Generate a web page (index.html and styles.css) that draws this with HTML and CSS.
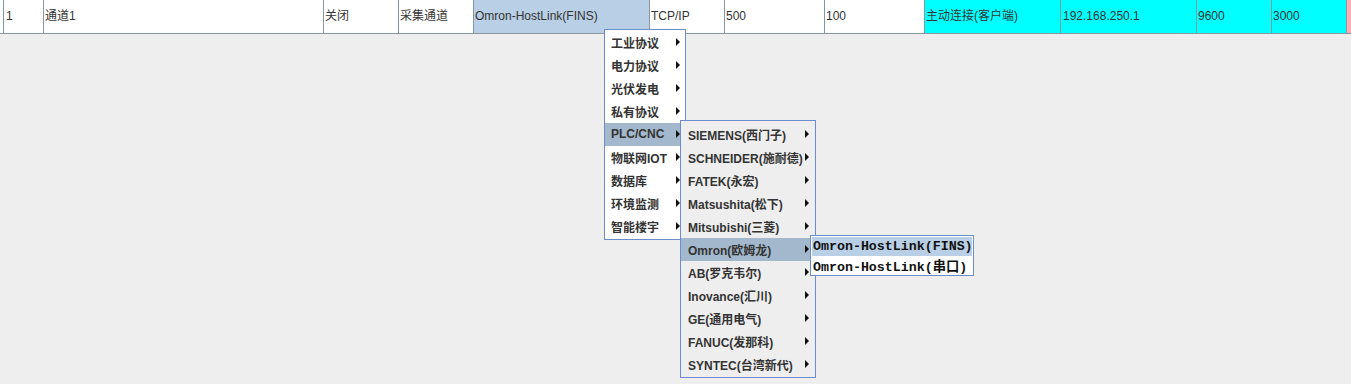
FILE: index.html
```html
<!DOCTYPE html>
<html lang="zh">
  <head>
    <meta charset="UTF-8" />
    <title>通道</title>
    <link rel="stylesheet" href="styles.css">
  </head>
  <body>
    <div class="rad">
      <div class="celle kant"></div>
      <div class="celle c1">1</div>
      <div class="celle c2">通道1</div>
      <div class="celle c3">关闭</div>
      <div class="celle c4">采集通道</div>
      <div class="celle c5 valgt">Omron-HostLink(FINS)</div>
      <div class="celle c6">TCP/IP</div>
      <div class="celle c7">500</div>
      <div class="celle c8">100</div>
      <div class="celle c9 cyan">主动连接(客户端)</div>
      <div class="celle c10 cyan">192.168.250.1</div>
      <div class="celle c11 cyan">9600</div>
      <div class="celle c12 cyan">3000</div>
      <div class="celle rosa"></div>
    </div>

    <ul class="menu menu1">
      <li>工业协议<span class="pil"></span></li>
      <li>电力协议<span class="pil"></span></li>
      <li>光伏发电<span class="pil"></span></li>
      <li>私有协议<span class="pil"></span></li>
      <li class="aktiv">PLC/CNC<span class="pil"></span></li>
      <li>物联网IOT<span class="pil"></span></li>
      <li>数据库<span class="pil"></span></li>
      <li>环境监测<span class="pil"></span></li>
      <li>智能楼宇<span class="pil"></span></li>
    </ul>

    <ul class="menu menu2">
      <li>SIEMENS(西门子)<span class="pil"></span></li>
      <li>SCHNEIDER(施耐德)<span class="pil"></span></li>
      <li>FATEK(永宏)<span class="pil"></span></li>
      <li>Matsushita(松下)<span class="pil"></span></li>
      <li>Mitsubishi(三菱)<span class="pil"></span></li>
      <li class="aktiv">Omron(欧姆龙)<span class="pil"></span></li>
      <li>AB(罗克韦尔)<span class="pil"></span></li>
      <li>Inovance(汇川)<span class="pil"></span></li>
      <li>GE(通用电气)<span class="pil"></span></li>
      <li>FANUC(发那科)<span class="pil"></span></li>
      <li>SYNTEC(台湾新代)<span class="pil"></span></li>
    </ul>

    <ul class="menu menu3">
      <li class="aktiv">Omron-HostLink(FINS)</li>
      <li>Omron-HostLink(串口)</li>
    </ul>
  </body>
</html>
```

FILE: styles.css
```css
* {
  box-sizing: border-box;
}

body {
  margin: 0;
  background: #eeeeee;
  width: 1351px;
  height: 384px;
  overflow: hidden;
  position: relative;
  font-family: "Liberation Sans", "Noto Sans CJK SC", sans-serif;
  font-size: 12px;
  color: #333333;
}

.rad {
  display: flex;
  height: 34px;
  background: #ffffff;
  border-bottom: 1px solid #8796a3;
}

.celle {
  height: 33px;
  line-height: 32px;
  padding-left: 2px;
  border-right: 1px solid #8796a3;
  white-space: nowrap;
  overflow: hidden;
}

.kant { width: 4px; padding: 0; }
.c1 { width: 40px; }
.c2 { width: 280px; padding-left: 1px; }
.c3 { width: 75px; padding-left: 1px; }
.c4 { width: 75px; padding-left: 1px; }
.c5 { width: 176px; padding-left: 1px; }
.c6 { width: 75px; padding-left: 1px; }
.c7 { width: 100px; padding-left: 1px; }
.c8 { width: 100px; padding-left: 1px; }
.c9 { width: 136px; padding-left: 1px; }
.c10 { width: 136px; padding-left: 2px; }
.c11 { width: 75px; padding-left: 1px; }
.c12 { width: 75px; padding-left: 1px; }

.valgt {
  background: #b8cfe5;
}

.cyan {
  background: #00ffff;
}

.rosa {
  flex: 1;
  background: #ffafaf;
  border-right: none;
}

.menu {
  position: absolute;
  margin: 0;
  list-style: none;
  border: 1px solid #6c8dcb;
  font-weight: bold;
}

.menu li {
  position: relative;
  display: flex;
  align-items: center;
  height: 23px;
  padding-bottom: 1px;
  white-space: nowrap;
}

.menu .aktiv {
  background: #a3b8cc;
}

.pil {
  position: absolute;
  top: 7px;
  width: 0;
  height: 0;
  border-top: 4px solid transparent;
  border-bottom: 4px solid transparent;
  border-left: 4px solid #111111;
}

.menu1 {
  left: 604px;
  top: 29px;
  width: 82px;
  padding: 1px 0;
  background: #ffffff;
}

.menu1 li {
  padding-left: 6px;
}

.menu1 .pil {
  left: 71px;
}

.menu2 {
  left: 680px;
  top: 120px;
  width: 136px;
  padding: 2px 0 1px;
  background: #eeeeee;
}

.menu2 li {
  padding-left: 7px;
}

.menu2 .pil {
  left: 124px;
}

.menu3 {
  left: 810px;
  top: 235px;
  width: 164px;
  padding: 1px 1px 0;
  background: #ffffff;
  font-family: "Liberation Mono", "Noto Sans CJK SC", monospace;
  font-size: 13.3px;
  color: #111111;
}

.menu3 li {
  height: 19px;
  padding-left: 1px;
}

.menu3 .aktiv {
  background: #b8cfe5;
}
```
